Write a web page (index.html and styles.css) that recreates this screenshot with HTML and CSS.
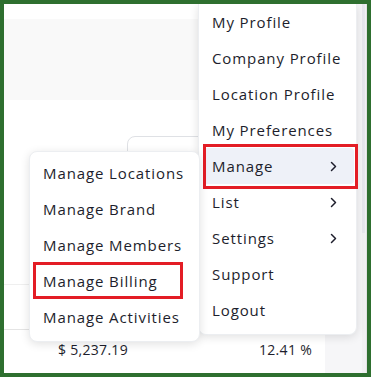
FILE: index.html
```html
<!DOCTYPE html>
<html lang="en">
<head>
  <meta charset="UTF-8">
  <meta name="viewport" content="width=device-width, initial-scale=1.0">
  <title>Account menu</title>
  <link rel="stylesheet" href="styles.css">
</head>
<body>
  <div class="frame">
    <div class="page">
      <div class="main">
        <div class="topbar"></div>
        <div class="band"></div>
        <div class="card"></div>
        <div class="row row-a"></div>
        <div class="row row-b"></div>
        <div class="row row-c">
          <span class="amount">$ 5,237.19</span>
          <span class="percent">12.41 %</span>
        </div>
      </div>
      <div class="side"></div>
    </div>
    <div class="scrollbar"><span class="thumb"></span></div>

    <!-- account dropdown -->
    <ul class="menu">
      <li class="menu-item">My Profile</li>
      <li class="menu-item">Company Profile</li>
      <li class="menu-item">Location Profile</li>
      <li class="menu-item">My Preferences</li>
      <li class="menu-item active marked">Manage
        <svg class="chev" width="7" height="11" viewBox="0 0 7 11"><polyline points="1.5,1.5 5.5,5.5 1.5,9.5" /></svg>
      </li>
      <li class="menu-item">List
        <svg class="chev" width="7" height="11" viewBox="0 0 7 11"><polyline points="1.5,1.5 5.5,5.5 1.5,9.5" /></svg>
      </li>
      <li class="menu-item">Settings
        <svg class="chev" width="7" height="11" viewBox="0 0 7 11"><polyline points="1.5,1.5 5.5,5.5 1.5,9.5" /></svg>
      </li>
      <li class="menu-item">Support</li>
      <li class="menu-item">Logout</li>
    </ul>

    <!-- manage submenu -->
    <ul class="submenu">
      <li class="sub-item">Manage Locations</li>
      <li class="sub-item">Manage Brand</li>
      <li class="sub-item">Manage Members</li>
      <li class="sub-item marked">Manage Billing</li>
      <li class="sub-item">Manage Activities</li>
    </ul>
  </div>
</body>
</html>
```

FILE: styles.css
```css
*{
  margin: 0;
  padding: 0;
  box-sizing: border-box;
}
body{
  background-color: #ffffff;
  font-family: 'Open Sans', 'Liberation Sans', sans-serif;
  color: #1d1e2c;
}
.frame{
  position: relative;
  width: 371px;
  height: 377px;
  border: 4px solid #2e6f2f;
  display: flex;
  overflow: hidden;
  background-color: #ffffff;
}
.page{
  flex: 1;
  display: flex;
}
.main{
  flex: 1;
  display: flex;
  flex-direction: column;
}
.topbar{
  height: 15px;
}
.band{
  height: 81px;
  background-color: #f9f9f9;
}
.card{
  height: 110px;
  margin: 36px -40px 0 123px;
  border: 1px solid #dfe1e5;
  border-radius: 8px;
}
.row-a{
  height: 39px;
  border-bottom: 1px solid #efefef;
}
.row-b{
  height: 45px;
  border-bottom: 1px solid #e4e4e4;
}
.row-c{
  display: flex;
  align-items: center;
  height: 39px;
  font-size: 14px;
  letter-spacing: 0.3px;
  padding-left: 54px;
}
.amount{
  width: 201px;
}
.side{
  width: 37px;
  background-color: #f6f6f8;
}
.scrollbar{
  width: 5px;
  background-color: #f1f1f3;
  border-right: 1px solid #e2e2e4;
}
.thumb{
  display: block;
  height: 229px;
  margin-right: 1px;
  background-color: #e7e8ee;
}

/* dropdowns */
.menu, .submenu{
  position: absolute;
  list-style: none;
  background-color: #ffffff;
  font-size: 15px;
  letter-spacing: 0.9px;
  box-shadow: 0 2px 10px rgba(0, 0, 0, 0.12);
}
.menu{
  left: 194px;
  top: 0;
  width: 159px;
  padding-bottom: 6px;
  border: 1px solid #eceef1;
  border-top: none;
  border-radius: 0 0 8px 8px;
}
.submenu{
  left: 25px;
  top: 147px;
  width: 171px;
  padding: 3px 0 6px;
  border: 1px solid #eceef1;
  border-radius: 8px;
}
.menu-item, .sub-item{
  position: relative;
  display: flex;
  align-items: center;
  height: 36px;
  white-space: nowrap;
}
.menu-item{
  padding: 0 19px 0 13px;
}
.sub-item{
  padding-left: 13px;
}
.chev{
  margin-left: auto;
  fill: none;
  stroke: #1d1e2c;
  stroke-width: 1.5;
  stroke-linecap: round;
  stroke-linejoin: round;
}
.menu-item.active{
  margin: 0 2px 0 4px;
  padding: 0 17px 0 9px;
  background-color: #eef1f8;
  border-radius: 4px;
}

/* red annotation boxes */
.marked::after{
  content: '';
  position: absolute;
  border: 3px solid #e31d25;
}
.menu-item.marked::after{
  left: 0;
  right: -4px;
  top: -4px;
  bottom: -5px;
}
.sub-item.marked::after{
  left: 3px;
  width: 144px;
  top: -1px;
  bottom: 0;
}
```
